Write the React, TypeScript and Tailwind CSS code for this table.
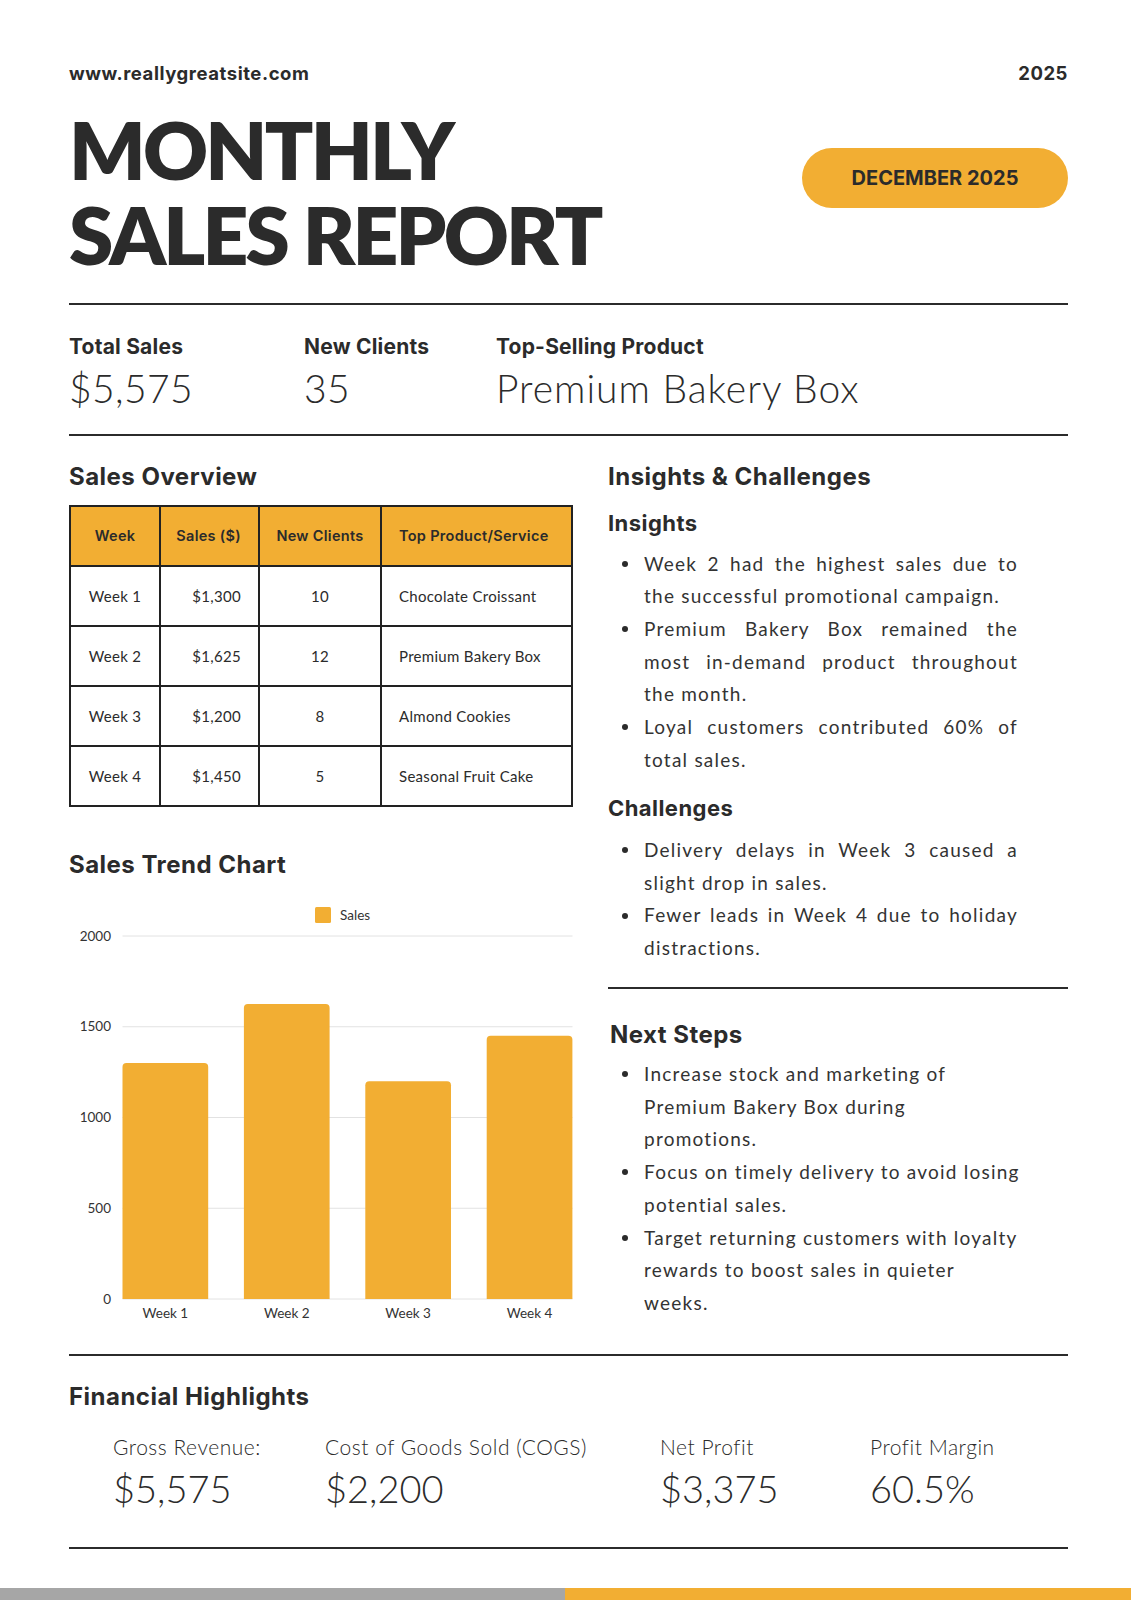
const sales = [
  { week: 'Week 1', sales: '$1,300', value: 1300, clients: '10', product: 'Chocolate Croissant' },
  { week: 'Week 2', sales: '$1,625', value: 1625, clients: '12', product: 'Premium Bakery Box' },
  { week: 'Week 3', sales: '$1,200', value: 1200, clients: '8', product: 'Almond Cookies' },
  { week: 'Week 4', sales: '$1,450', value: 1450, clients: '5', product: 'Seasonal Fruit Cake' },
];

// lines are kept as in the printed report
const insights = [
  ['Week 2 had the highest sales due to', 'the successful promotional campaign.'],
  ['Premium Bakery Box remained the', 'most in-demand product throughout', 'the month.'],
  ['Loyal customers contributed 60% of', 'total sales.'],
];

const challenges = [
  ['Delivery delays in Week 3 caused a', 'slight drop in sales.'],
  ['Fewer leads in Week 4 due to holiday', 'distractions.'],
];

const nextSteps = [
  ['Increase stock and marketing of', 'Premium Bakery Box during', 'promotions.'],
  ['Focus on timely delivery to avoid losing', 'potential sales.'],
  ['Target returning customers with loyalty', 'rewards to boost sales in quieter', 'weeks.'],
];

function Bullets({ items, justify }: { items: string[][]; justify?: boolean }) {
  return (
    <ul className="flex flex-col">
      {items.map((lines) => (
        <li key={lines[0]} className="flex">
          <span className="w-[36px] shrink-0 h-[32.7px] flex items-center pl-[14px]">
            <span className="w-[6px] h-[6px] rounded-full bg-[#2b2b2b]" />
          </span>
          <div className="w-[374px] text-[19px] leading-[32.7px] tracking-[0.065em] text-[#333]">
            {lines.map((l, i) => (
              <div
                key={l}
                className={`whitespace-nowrap ${
                  justify && i < lines.length - 1 ? 'text-justify [text-align-last:justify]' : 'text-left'
                }`}
              >
                {l}
              </div>
            ))}
          </div>
        </li>
      ))}
    </ul>
  );
}

function Chart() {
  // plot area: x 53.5 -> 503.5, y 39 (2000) -> 402 (0)
  const top = 39;
  const base = 402;
  const span = base - top;
  const barW = 85.7;
  const step = 121.4;
  const x0 = 53.5;
  const ticks = [2000, 1500, 1000, 500, 0];

  return (
    <svg width="504" height="430" className="block mt-[17px]" fontFamily="Lato, sans-serif">
      <rect x="246" y="10" width="16" height="16" rx="1.5" fill="#F2AE33" />
      <text x="271" y="23" fontSize="13.5" fill="#333">Sales</text>
      {ticks.map((t) => {
        const y = base - (t / 2000) * span;
        return (
          <g key={t}>
            <line x1={x0} x2="503.5" y1={y} y2={y} stroke="#e2e2e2" strokeWidth="1" />
            <text x="42" y={y + 4.5} fontSize="13.5" fill="#333" textAnchor="end">{t}</text>
          </g>
        );
      })}
      {sales.map((s, i) => {
        const h = (s.value / 2000) * span;
        const x = x0 + i * step;
        const y = base - h;
        const r = 4;
        const d = `M${x},${base} L${x},${y + r} Q${x},${y} ${x + r},${y} L${x + barW - r},${y} Q${x + barW},${y} ${x + barW},${y + r} L${x + barW},${base} Z`;
        return (
          <g key={s.week}>
            <path d={d} fill="#F2AE33" />
            <text x={x + barW / 2} y="421" fontSize="13.5" fill="#333" textAnchor="middle">{s.week}</text>
          </g>
        );
      })}
    </svg>
  );
}

export default function App() {
  return (
    <div className="w-[1131px] h-[1600px] bg-white flex flex-col font-['Lato',sans-serif] text-[#2b2b2b]">
      <div className="pl-[69px] pr-[63px] flex-1">
        {/* Header */}
        <div className="flex justify-between items-center pt-[61px] text-[18.5px] font-bold leading-[24px] font-['Inter',sans-serif] tracking-[0.03em]">
          <span>www.reallygreatsite.com</span>
          <span>2025</span>
        </div>

        {/* Title */}
        <div className="flex justify-between items-start mt-[22px]">
          <h1 className="text-[80px] font-extrabold tracking-[-0.035em]">
            <div className="leading-[85px]">MONTHLY</div>
            <div className="leading-[85px]">SALES REPORT</div>
          </h1>
          <div className="mt-[41px] w-[266px] h-[60px] rounded-full bg-[#F2AE33] flex items-center justify-center font-['Inter',sans-serif] text-[20px] font-bold">
            DECEMBER 2025
          </div>
        </div>

        <div className="h-[2px] bg-[#2b2b2b] mt-[26px]" />

        {/* Stats */}
        <div className="flex mt-[29px]">
          <div className="w-[235px]">
            <div className="font-['Inter',sans-serif] text-[21px] font-bold leading-[26px] tracking-[0.01em]">Total Sales</div>
            <div className="text-[39px] font-light leading-[46px] mt-[5px] tracking-[0.01em]">$5,575</div>
          </div>
          <div className="w-[192px]">
            <div className="font-['Inter',sans-serif] text-[21px] font-bold leading-[26px] tracking-[0.01em]">New Clients</div>
            <div className="text-[39px] font-light leading-[46px] mt-[5px] tracking-[0.01em]">35</div>
          </div>
          <div>
            <div className="font-['Inter',sans-serif] text-[21px] font-bold leading-[26px] tracking-[0.01em]">Top-Selling Product</div>
            <div className="text-[39px] font-light leading-[46px] mt-[5px] tracking-[0.025em]">Premium Bakery Box</div>
          </div>
        </div>

        <div className="h-[2px] bg-[#2b2b2b] mt-[23px]" />

        {/* Two columns */}
        <div className="flex gap-[35px] h-[918px]">
          {/* Left */}
          <div className="w-[504px]">
            <h2 className="font-['Inter',sans-serif] text-[24px] font-bold leading-[30px] mt-[25.5px] tracking-[0.02em]">Sales Overview</h2>
            <table className="mt-[13.5px] w-[504px] border-collapse border-2 border-[#222] text-[15px] tracking-[0.02em] table-fixed">
              <colgroup>
                <col className="w-[90px]" />
                <col className="w-[99px]" />
                <col className="w-[122px]" />
                <col />
              </colgroup>
              <thead className="font-['Inter',sans-serif] text-[14.5px]">
                <tr className="bg-[#F2AE33] h-[60px]">
                  <th className="border-2 border-[#222] font-semibold text-center">Week</th>
                  <th className="border-2 border-[#222] font-semibold text-right pr-[17px]">Sales ($)</th>
                  <th className="border-2 border-[#222] font-semibold text-center">New Clients</th>
                  <th className="border-2 border-[#222] font-semibold text-left pl-[17px]">Top Product/Service</th>
                </tr>
              </thead>
              <tbody>
                {sales.map((s) => (
                  <tr key={s.week} className="h-[60px]">
                    <td className="border-2 border-[#222] text-center">{s.week}</td>
                    <td className="border-2 border-[#222] text-right pr-[17px]">{s.sales}</td>
                    <td className="border-2 border-[#222] text-center">{s.clients}</td>
                    <td className="border-2 border-[#222] text-left pl-[17px]">{s.product}</td>
                  </tr>
                ))}
              </tbody>
            </table>

            <h2 className="font-['Inter',sans-serif] text-[24px] font-bold leading-[30px] mt-[43px] tracking-[0.02em]">Sales Trend Chart</h2>
            <Chart />
          </div>

          {/* Right */}
          <div className="flex-1">
            <h2 className="font-['Inter',sans-serif] text-[24px] font-bold leading-[30px] mt-[25.5px] tracking-[0.02em]">Insights &amp; Challenges</h2>
            <h3 className="font-['Inter',sans-serif] text-[22px] font-bold leading-[28px] mt-[17px] tracking-[0.02em]">Insights</h3>
            <div className="mt-[11px]">
              <Bullets items={insights} justify />
            </div>
            <h3 className="font-['Inter',sans-serif] text-[22px] font-bold leading-[28px] mt-[18px] tracking-[0.02em]">Challenges</h3>
            <div className="mt-[11.6px]">
              <Bullets items={challenges} justify />
            </div>
            <div className="h-[2px] bg-[#2b2b2b] mt-[22.6px]" />
            <h2 className="font-['Inter',sans-serif] text-[24px] font-bold leading-[30px] mt-[31px] pl-[2px] tracking-[0.02em]">Next Steps</h2>
            <div className="mt-[7.6px]">
              <Bullets items={nextSteps} />
            </div>
          </div>
        </div>

        <div className="h-[2px] bg-[#2b2b2b]" />

        {/* Financial */}
        <h2 className="font-['Inter',sans-serif] text-[24px] font-bold leading-[30px] mt-[26px] tracking-[0.02em]">Financial Highlights</h2>
        <div className="flex pl-[44px] mt-[22px]">
          {[
            { label: 'Gross Revenue:', value: '$5,575', w: 'w-[212px]' },
            { label: 'Cost of Goods Sold (COGS)', value: '$2,200', w: 'w-[335px]' },
            { label: 'Net Profit', value: '$3,375', w: 'w-[210px]' },
            { label: 'Profit Margin', value: '60.5%', w: 'flex-1' },
          ].map((f) => (
            <div key={f.label} className={f.w}>
              <div className="text-[21px] font-light leading-[26px] tracking-[0.025em]">{f.label}</div>
              <div className="text-[38px] font-light leading-[46px] mt-[5px]">{f.value}</div>
            </div>
          ))}
        </div>

        <div className="h-[2px] bg-[#2b2b2b] mt-[36px]" />
      </div>

      {/* Bottom bar */}
      <div className="flex h-[12px]">
        <div className="w-[565px] bg-[#a6a6a6]" />
        <div className="flex-1 bg-[#F2AE33]" />
      </div>
    </div>
  );
}
